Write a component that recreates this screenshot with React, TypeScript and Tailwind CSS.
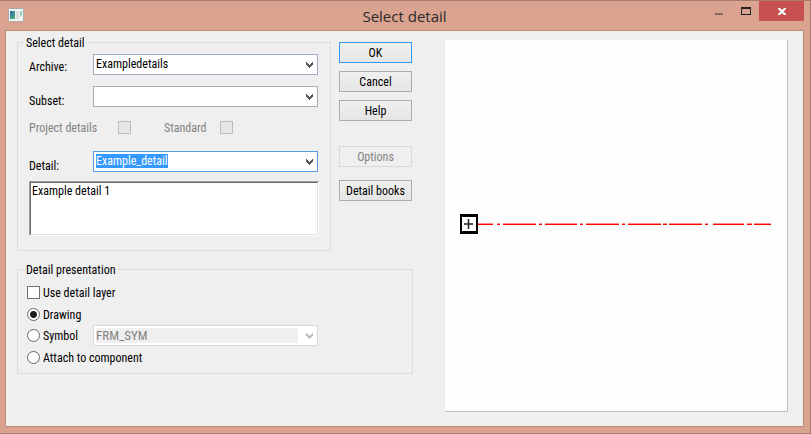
import { useEffect, useRef } from "react";
import type { ReactNode } from "react";

const dashes: [number, number][] = [
  [32, 48], [52, 55], [58, 91], [94, 97], [100, 132], [135, 138], [141, 174],
  [177, 180], [183, 216], [218, 222], [224, 257], [260, 263], [268, 299],
  [302, 307], [309, 326],
];

function Chevron({ className }: { className: string }) {
  return (
    <svg
      className={`pointer-events-none absolute top-[7px] right-1 h-[6px] w-[7px] ${className}`}
      viewBox="0 0 7 6"
      aria-hidden="true"
    >
      <path d="M0 0h1v1h1v1h1v1h1V2h1V1h1V0h1v3H6v1H5v1H4v1H3V5H2V4H1V3H0z" fill="currentColor" />
    </svg>
  );
}

function Combo({ id, value, border }: { id: string; value: string; border: string }) {
  return (
    <div className={`relative w-[225px] border bg-white ${border}`}>
      <select id={id} className="block h-[19px] w-full appearance-none pb-px pl-[2px] leading-[18px] outline-none">
        <option>{value}</option>
      </select>
      <Chevron className="text-[#555]" />
    </div>
  );
}

function PushButton({ children, className = "border-[#acacac]", disabled = false }: {
  children: ReactNode;
  className?: string;
  disabled?: boolean;
}) {
  return (
    <button
      type="button"
      disabled={disabled}
      className={`h-[21px] border bg-linear-to-b from-[#f0f0f0] to-[#e5e5e5] text-center leading-[18px] whitespace-nowrap disabled:from-[#efefef] disabled:to-[#efefef] disabled:text-[#838383] ${className}`}
    >
      {children}
    </button>
  );
}

const radioClass =
  "size-[13px] appearance-none rounded-full border border-[#666] bg-white checked:bg-[radial-gradient(circle,#1c1c1c_3px,#fff_4px)]";

export default function App() {
  const detail = useRef<HTMLInputElement>(null);
  useEffect(() => {
    detail.current?.focus();
    detail.current?.select();
  }, []);

  return (
    <div className="flex min-h-screen flex-col border-t border-r border-b border-[#a87b6c] bg-[#d9a38f] pr-[6px] pb-[6px] pl-[5px] font-['Roboto_Condensed','Open_Sans_Condensed','Noto_Sans_Condensed',Roboto,sans-serif] text-[12px] leading-[14px] text-black">
      <header className="grid h-[29px] grid-cols-[1fr_auto_1fr]">
        <svg className="mt-[7px] ml-[3px] h-[14px] w-[16px]" viewBox="0 0 16 14" aria-hidden="true">
          <rect x=".5" y=".5" width="15" height="13" rx="1" fill="#f3f5f5" stroke="#a5aaab" />
          <rect x="2" y="3" width="5" height="8" fill="#3f8f91" />
          <path d="M2 3h3L2 8z" fill="#3d6fa5" />
          <path d="M3 11l4-5v5z" fill="#4ea57a" />
          <rect x="8" y="3" width="3" height="8" fill="#dfe1e1" />
          <path d="M12 3h2v4l-2 2z" fill="#8fd0b5" />
        </svg>
        <h1 className="pt-[5px] font-['Open_Sans',sans-serif] text-[15px] leading-[20px] text-[#2b2b2b]">
          Select detail
        </h1>
        <div className="flex justify-end">
          <button type="button" aria-label="Minimize" className="flex h-[20px] w-[27px] items-center justify-center">
            <svg className="size-[12px]" viewBox="0 0 12 12" aria-hidden="true">
              <path d="M2 8h8v2H2z" fill="#866a60" />
            </svg>
          </button>
          <button type="button" aria-label="Maximize" className="flex h-[20px] w-[27px] items-center justify-center">
            <svg className="h-[8px] w-[10px]" viewBox="0 0 10 8" aria-hidden="true">
              <path d="M0 0h10v8H0zM1 2v5h8V2z" fill="#222" fillRule="evenodd" />
            </svg>
          </button>
          <button type="button" aria-label="Close" className="flex h-[20px] w-[45px] items-center justify-center bg-[#c75050]">
            <svg className="h-[7px] w-[8px]" viewBox="0 0 8 7" aria-hidden="true">
              <path d="M0 0h2l2 2 2-2h2v1L5.500 3.500 8 6v1H6L4 5 2 7H0V6l2.500-2.500L0 1z" fill="#fff" />
            </svg>
          </button>
        </div>
      </header>

      <main className="flex flex-1 border border-[#b98a79] bg-[#efefef] pr-[15px] pb-[14px] pl-[11px]">
        <form className="w-[396px] shrink-0 pt-1">
          <div className="flex gap-2">
            <fieldset className="w-[314px] border border-[#dcdcdc] pt-1 pr-[12px] pb-[14px] pl-[11px]">
              <legend className="-ml-[5px] h-[15px] px-[2px] pt-px">Select detail</legend>
              <div className="flex justify-between">
                <label htmlFor="archive" className="pt-[6px]">Archive:</label>
                <Combo id="archive" value="Exampledetails" border="border-[#a0aec4]" />
              </div>
              <div className="mt-[11px] flex h-[21px] justify-between">
                <label htmlFor="subset" className="pt-[8px]">Subset:</label>
                <Combo id="subset" value="" border="border-[#abadb3]" />
              </div>
              <div className="mt-[14px] flex h-[13px] items-center text-[#838383]">
                <label htmlFor="project" className="w-[89px]">Project details</label>
                <input id="project" type="checkbox" disabled className="size-[13px] appearance-none border border-[#bcbcbc] bg-[#e6e6e6]" />
                <label htmlFor="standard" className="ml-[33px] w-[56px]">Standard</label>
                <input id="standard" type="checkbox" disabled className="size-[13px] appearance-none border border-[#bcbcbc] bg-[#e6e6e6]" />
              </div>
              <div className="mt-[17px] flex h-[21px] justify-between">
                <label htmlFor="detail" className="pt-[8px]">Detail:</label>
                <div className="relative h-[21px] w-[225px] border border-[#569de5] bg-white pt-[2px] pl-[2px]">
                  <input
                    id="detail"
                    ref={detail}
                    role="combobox"
                    aria-expanded="false"
                    defaultValue="Example_detail"
                    className="block h-[14px] w-[203px] leading-[14px] outline-none selection:bg-[#3399ff] selection:text-white"
                  />
                  <Chevron className="text-[#555]" />
                </div>
              </div>
              <div className="mt-[9px] -mr-px border border-t-[#a0a0a0] border-r-white border-b-white border-l-[#a0a0a0]">
                <select
                  size={3}
                  aria-label="Details"
                  className="block h-[53px] w-full appearance-none overflow-hidden border border-t-[#696969] border-r-[#e3e3e3] border-b-[#e3e3e3] border-l-[#696969] bg-white pt-px outline-none"
                >
                  <option className="px-px py-0 leading-[14px]">Example detail 1</option>
                </select>
              </div>
            </fieldset>

            <div className="flex w-[73px] flex-col gap-2 pt-[7px]">
              <PushButton className="border-[#3399ff]">OK</PushButton>
              <PushButton>Cancel</PushButton>
              <PushButton>Help</PushButton>
              <PushButton className="mt-[17px] mb-[5px] border-[#d9d9d9]" disabled>Options</PushButton>
              <PushButton>Detail books</PushButton>
            </div>
          </div>

          <fieldset className="mt-[11px] border border-[#dcdcdc] px-[9px] pt-[9px] pb-[9px]">
            <legend className="-ml-[3px] h-[15px] px-[2px] pt-px">Detail presentation</legend>
            <label className="flex h-[13px] items-center gap-[3px]">
              <input type="checkbox" className="size-[13px] appearance-none border border-[#707070] bg-white" />
              Use detail layer
            </label>
            <label className="mt-[9px] flex h-[13px] items-center gap-[3px]">
              <input type="radio" name="presentation" defaultChecked className={radioClass} />
              Drawing
            </label>
            <div className="mt-1 flex h-[21px] items-center">
              <label className="flex w-[66px] items-center gap-[3px]">
                <input type="radio" name="presentation" className={radioClass} />
                Symbol
              </label>
              <div className="relative w-[225px] border border-[#d9d9d9] bg-white">
                <select
                  aria-label="Symbol name"
                  disabled
                  className="block h-[19px] w-full appearance-none bg-[#efefef] bg-clip-content py-[2px] pr-[19px] pl-[2px] text-[13px] leading-[14px] text-[#838383] opacity-100"
                >
                  <option>FRM_SYM</option>
                </select>
                <Chevron className="text-[#bcbcbc]" />
              </div>
            </div>
            <label className="mt-[5px] flex h-[13px] items-center gap-[3px]">
              <input type="radio" name="presentation" className={radioClass} />
              Attach to component
            </label>
          </fieldset>
        </form>

        <section aria-label="Preview" className="mt-[9px] ml-8 flex flex-1 border-r border-b border-[#c0c0c0] bg-[#fdfdfd]">
          <svg className="h-auto w-full" viewBox="0 0 342 371" role="img" aria-label="Detail drawing">
            {dashes.map(([from, to]) => (
              <g key={from}>
                <rect x={from} y="183" width={to - from} height="1" fill="#ff8c8c" />
                <rect x={from} y="184" width={to - from} height="1" fill="#f00" />
              </g>
            ))}
            <path d="M15 174h18v20H15zM17 177v14h14v-14z" fill="#000" fillRule="evenodd" />
            <path d="M17 177h14v14H17z" fill="#fff" />
            <path d="M19 184h9M23.500 179v10" stroke="#222" strokeWidth="1.500" />
          </svg>
        </section>
      </main>
    </div>
  );
}
